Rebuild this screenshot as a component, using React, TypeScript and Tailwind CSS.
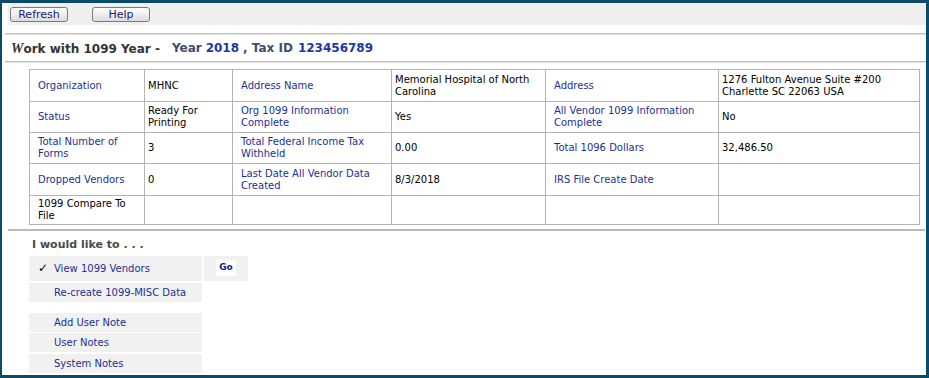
import React from "react";

type Cell = { text: string; link?: boolean };

const rows: Cell[][] = [
  [
    { text: "Organization", link: true },
    { text: "MHNC" },
    { text: "Address Name", link: true },
    { text: "Memorial Hospital of North Carolina" },
    { text: "Address", link: true },
    { text: "1276 Fulton Avenue Suite #200 Charlette SC 22063 USA" },
  ],
  [
    { text: "Status", link: true },
    { text: "Ready For Printing" },
    { text: "Org 1099 Information Complete", link: true },
    { text: "Yes" },
    { text: "All Vendor 1099 Information Complete", link: true },
    { text: "No" },
  ],
  [
    { text: "Total Number of Forms", link: true },
    { text: "3" },
    { text: "Total Federal Income Tax Withheld", link: true },
    { text: "0.00" },
    { text: "Total 1096 Dollars", link: true },
    { text: "32,486.50" },
  ],
  [
    { text: "Dropped Vendors", link: true },
    { text: "0" },
    { text: "Last Date All Vendor Data Created", link: true },
    { text: "8/3/2018" },
    { text: "IRS File Create Date", link: true },
    { text: "" },
  ],
  [
    { text: "1099 Compare To File" },
    { text: "" },
    { text: "" },
    { text: "" },
    { text: "" },
    { text: "" },
  ],
];

const rowHeights = ["h-[32px]", "h-[31px]", "h-[31px]", "h-[32px]", "h-[29px]"];
const colWidths = ["w-[115px]", "w-[88px]", "w-[159px]", "w-[154px]", "w-[173px]", "w-[201px]"];

const ToolButton = ({ label }: { label: string }) => (
  <button
    type="button"
    className="flex h-[15px] w-[58px] items-center justify-center rounded-[3px] border border-[#7a7a7a] bg-gradient-to-b from-white to-[#dcdcdc] text-[11px] leading-none text-[#1a1a7a]"
  >
    {label}
  </button>
);

const ActionRow = ({ label, checked }: { label: string; checked?: boolean }) => (
  <div className="flex h-full w-[173px] items-center bg-[#f1f1f1]">
    <span className="w-[25px] pl-[9px] text-[12px] font-bold text-black">{checked ? "✓" : ""}</span>
    <span className="text-[#1c2f96]">{label}</span>
  </div>
);

export default function App() {
  return (
    <div className="h-[378px] w-[929px] overflow-hidden border-l-2 border-t-[3px] border-r-[3px] border-b-[3px] border-[#0c4a69] bg-white font-['DejaVu_Sans',sans-serif] text-[10px] text-black">
      {/* toolbar */}
      <div className="ml-[6px] flex h-[22px] items-center gap-[24px] bg-[#efefef] pl-[2px]">
        <ToolButton label="Refresh" />
        <ToolButton label="Help" />
      </div>

      <div className="ml-[3px] mt-[8px] h-[2px] border-t border-b border-t-[#c2c2ba] border-b-[#e2e2dc]" />

      <div className="flex h-[26px] items-center pl-[9px] text-[12px] font-bold">
        <span className="text-[#333]">
          <span className="font-['Liberation_Serif',serif] text-[14px] italic">W</span>ork with 1099 Year -
        </span>
        <span className="ml-[12px] text-[#3e4d6a]">Year</span>
        <span className="ml-[4px] text-[#1f37a3]">2018</span>
        <span className="ml-[4px] text-[#3e4d6a]">, Tax ID</span>
        <span className="ml-[5px] text-[#1f37a3]">123456789</span>
      </div>

      <div className="ml-[3px] h-[2px] border-t border-b border-t-[#c2c2ba] border-b-[#e2e2dc]" />

      <table className="ml-[27px] mt-[6px] w-[890px] table-fixed border-collapse">
        <tbody>
          {rows.map((row, r) => (
            <tr key={r} className={rowHeights[r]}>
              {row.map((cell, c) => (
                <td
                  key={c}
                  className={
                    "border border-[#b4b4b4] p-0 align-middle leading-[12px] " +
                    colWidths[c] +
                    (c % 2 === 0 ? " pl-[8px] pr-[4px]" : " pl-[3px] pr-[4px]") +
                    (cell.link ? " text-[#1c2f96]" : " text-black")
                  }
                >
                  {cell.text}
                </td>
              ))}
            </tr>
          ))}
        </tbody>
      </table>

      <div className="ml-[6px] mt-[4px] w-[917px] border-t-2 border-[#bcbcb4]" />

      <div className="mt-[6px] pl-[30px] text-[11px] font-bold text-[#4a4a4a]">I would like to . . .</div>

      <div className="ml-[27px] mt-[2px] flex flex-col">
        <div className="flex h-[25px] gap-[2px]">
          <ActionRow label="View 1099 Vendors" checked />
          <div className="flex w-[44px] items-center justify-center bg-[#f1f1f1]">
            <span className="bg-white px-[3px] py-[1px] text-[9px] font-bold text-[#1a1a8a]">Go</span>
          </div>
        </div>
        <div className="mt-[2px] h-[19px]">
          <ActionRow label="Re-create 1099-MISC Data" />
        </div>
        <div className="mt-[11px] h-[19px]">
          <ActionRow label="Add User Note" />
        </div>
        <div className="mt-[1px] h-[19px]">
          <ActionRow label="User Notes" />
        </div>
        <div className="mt-[2px] h-[19px]">
          <ActionRow label="System Notes" />
        </div>
      </div>
    </div>
  );
}
